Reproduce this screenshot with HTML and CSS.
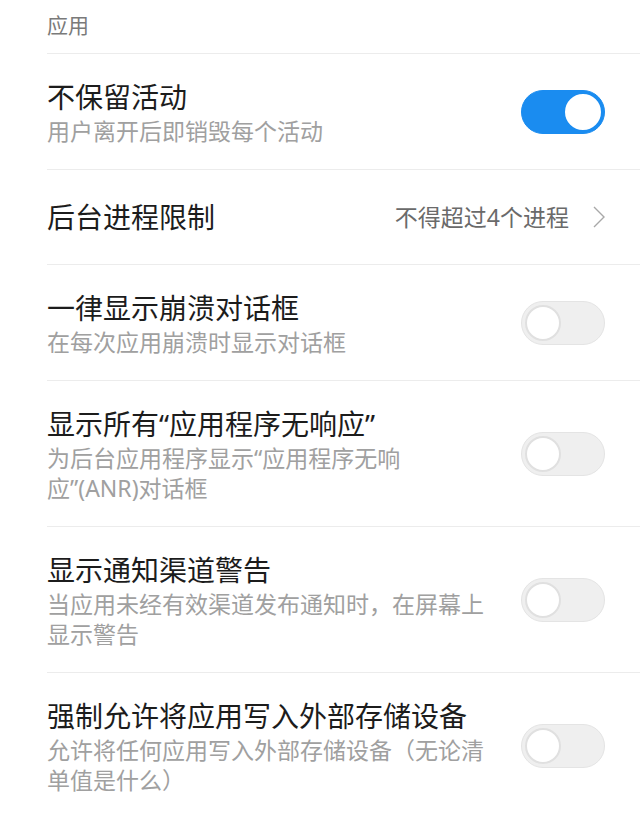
FILE: index.html
```html
<!DOCTYPE html>
<html lang="zh-CN">
<head>
    <meta charset="UTF-8">
    <title>开发者选项</title>
    <link rel="stylesheet" href="styles.css">
</head>
<body>
<div class="settings">
    <div class="section-title">应用</div>

    <div class="row">
        <div class="text">
            <div class="title">不保留活动</div>
            <div class="summary">用户离开后即销毁每个活动</div>
        </div>
        <span class="switch on"><span class="knob"></span></span>
    </div>

    <div class="row row-single">
        <div class="text">
            <div class="title">后台进程限制</div>
        </div>
        <div class="value">不得超过4个进程</div>
        <svg class="chevron" width="12" height="22" viewBox="0 0 12 22">
            <polyline points="1,1 11,11 1,21" fill="none" stroke="#a8a8a8" stroke-width="1.4"/>
        </svg>
    </div>

    <div class="row">
        <div class="text">
            <div class="title">一律显示崩溃对话框</div>
            <div class="summary">在每次应用崩溃时显示对话框</div>
        </div>
        <span class="switch"><span class="knob"></span></span>
    </div>

    <div class="row">
        <div class="text">
            <div class="title">显示所有“应用程序无响应”</div>
            <div class="summary">为后台应用程序显示“应用程序无响<span class="nobr">应”(ANR)</span>对话框</div>
        </div>
        <span class="switch"><span class="knob"></span></span>
    </div>

    <div class="row">
        <div class="text">
            <div class="title">显示通知渠道警告</div>
            <div class="summary">当应用未经有效渠道发布通知时，在屏幕上显示警告</div>
        </div>
        <span class="switch"><span class="knob"></span></span>
    </div>

    <div class="row">
        <div class="text">
            <div class="title">强制允许将应用写入外部存储设备</div>
            <div class="summary">允许将任何应用写入外部存储设备（无论清单值是什么）</div>
        </div>
        <span class="switch"><span class="knob"></span></span>
    </div>
</div>
</body>
</html>
```

FILE: styles.css
```css
body {
    margin: 0;
    padding: 0;
    background-color: #ffffff;
    font-family: "Noto Sans", "Noto Sans CJK SC", sans-serif;
    color: #1c1c1c;
}

.settings {
    width: 640px;
}

.section-title {
    margin-left: 47px;
    padding: 10px 0 13px;
    font-size: 21px;
    line-height: 30px;
    color: #7a7a7a;
    border-bottom: 1px solid #ececec;
}

.row {
    display: flex;
    align-items: center;
    gap: 35px;
    margin-left: 47px;
    padding: 24px 35px 23px 0;
    border-bottom: 1px solid #ececec;
}

.row-single {
    padding-top: 28px;
    padding-bottom: 28px;
    gap: 0;
}

.text {
    flex: 1;
    min-width: 0;
}

.title {
    font-size: 28px;
    line-height: 38px;
    color: #1c1c1c;
}

.summary {
    font-size: 23px;
    line-height: 30px;
    color: #a0a0a0;
}

.nobr {
    white-space: nowrap;
}

.value {
    font-size: 23px;
    line-height: 36px;
    color: #6a6a6a;
    margin-right: 24px;
}

.chevron {
    flex-shrink: 0;
}

.switch {
    flex-shrink: 0;
    display: flex;
    align-items: center;
    box-sizing: border-box;
    width: 84px;
    height: 44px;
    padding: 3px;
    border-radius: 22px;
    background-color: #efefef;
    border: 1px solid #e4e4e4;
}

.knob {
    box-sizing: border-box;
    width: 36px;
    height: 36px;
    border-radius: 50%;
    background-color: #ffffff;
    border: 2px solid #e0e0e0;
}

.switch.on {
    justify-content: flex-end;
    background-color: #1a8cf0;
    border-color: #1a8cf0;
}

.switch.on .knob {
    border-color: #ffffff;
}
```
